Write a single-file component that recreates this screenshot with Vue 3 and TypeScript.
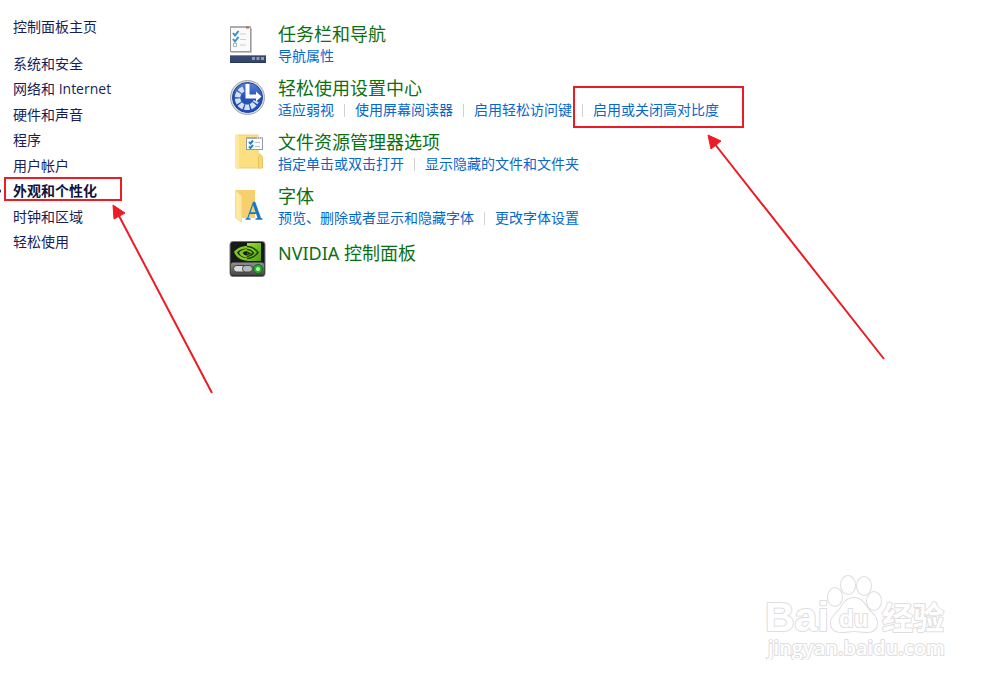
<script setup lang="ts">
interface Category {
  label: string
  current?: boolean
}

interface Task {
  label: string
  marked?: boolean
}

interface Group {
  icon: string
  title: string
  tasks: Task[]
}

const categories: Category[] = [
  { label: '系统和安全' },
  { label: '网络和 Internet' },
  { label: '硬件和声音' },
  { label: '程序' },
  { label: '用户帐户' },
  { label: '外观和个性化', current: true },
  { label: '时钟和区域' },
  { label: '轻松使用' },
]

const groups: Group[] = [
  { icon: 'taskbar', title: '任务栏和导航', tasks: [{ label: '导航属性' }] },
  {
    icon: 'ease',
    title: '轻松使用设置中心',
    tasks: [
      { label: '适应弱视' },
      { label: '使用屏幕阅读器' },
      { label: '启用轻松访问键' },
      { label: '启用或关闭高对比度', marked: true },
    ],
  },
  {
    icon: 'explorer',
    title: '文件资源管理器选项',
    tasks: [{ label: '指定单击或双击打开' }, { label: '显示隐藏的文件和文件夹' }],
  },
  {
    icon: 'fonts',
    title: '字体',
    tasks: [{ label: '预览、删除或者显示和隐藏字体' }, { label: '更改字体设置' }],
  },
  { icon: 'nvidia', title: 'NVIDIA 控制面板', tasks: [] },
]
</script>

<template>
  <div class="panel">
    <nav class="sidebar" aria-label="控制面板">
      <a class="home" href="#">控制面板主页</a>
      <ul class="categories">
        <li v-for="c in categories" :key="c.label" :class="{ current: c.current }">
          <a href="#" :aria-current="c.current ? 'page' : undefined">{{ c.label }}</a>
        </li>
      </ul>
    </nav>

    <main class="groups">
      <section v-for="g in groups" :key="g.icon" class="group">
        <svg v-if="g.icon === 'taskbar'" class="icon" viewBox="0 0 40 40" aria-hidden="true">
          <rect x="2.500" y="2.500" width="20" height="25" fill="#fafafa" stroke="#9b9b9b" />
          <path d="M23.500 4v24.500H3" fill="none" stroke="#c4c4c4" />
          <path d="M2 3h21" stroke="#a9adb0" stroke-width="2" />
          <path d="M18 3.500h3" stroke="#c4605a" stroke-width="2" />
          <path d="M5 9l2 2.500L10.500 7M5 15l2 2.500L10.500 13" fill="none" stroke="#2f93cf" stroke-width="2" />
          <rect x="5.500" y="19.500" width="3" height="3" fill="#fff" stroke="#b5b5b5" />
          <path d="M12 10h6M12 15.500h6M12 21h6" stroke="#c9ced1" />
          <rect x="2" y="31" width="36" height="8" fill="#34486f" />
          <path d="M2 31.500h36" stroke="#7485a6" />
          <path d="M2 38.500h36" stroke="#273655" />
          <path d="M24 34.500h3M28.500 34.500h3M33 34.500h3" stroke="#8f9db8" stroke-width="3" />
        </svg>

        <svg v-else-if="g.icon === 'ease'" class="icon" viewBox="0 0 40 40" aria-hidden="true">
          <defs>
            <linearGradient id="easeBlue" x1="0" y1="0" x2="0" y2="1">
              <stop offset="0" stop-color="#5b83d4" />
              <stop offset=".5" stop-color="#2451b4" />
              <stop offset="1" stop-color="#1f50c0" />
            </linearGradient>
          </defs>
          <circle cx="19.500" cy="19.500" r="17" fill="#d7dadd" stroke="#a3a8ad" />
          <circle cx="19.500" cy="19.500" r="15" fill="url(#easeBlue)" stroke="#1c409a" />
          <path d="M15.500 11A9.500 9.500 0 1 0 28 23" fill="none" stroke="#d5dff6" stroke-width="5.500" stroke-dasharray="4.700 1.200" />
          <path d="M17.500 6h4v10.500h6.500V13.500L33.500 18.500l-5.500 5v-3H17.500z" fill="#fff" />
        </svg>

        <svg v-else-if="g.icon === 'explorer'" class="icon" viewBox="0 0 40 40" aria-hidden="true">
          <path d="M8 3h22v19h2V36H8z" fill="#fbdf80" stroke="#f0d072" />
          <path d="M8 3h3v33H8z" fill="#ffe99f" />
          <path d="M30.500 36V25l2-2.500 2 2.500v11z" fill="#f9d872" stroke="#e8c460" />
          <rect x="18.500" y="5.500" width="16" height="12" fill="#fafcfd" stroke="#969b9d" />
          <path d="M18 6h17" stroke="#a9adb0" stroke-width="2" />
          <path d="M29 6h1M31 6h1M33 6h1" stroke="#fff" />
          <path d="M21 10l1.500 1.500L25 8.500M21 14.500l1.500 1.500L25 13" fill="none" stroke="#2385cc" stroke-width="2" />
          <path d="M27 10.500h5M27 14.500h5" stroke="#bdc3c6" />
        </svg>

        <svg v-else-if="g.icon === 'fonts'" class="icon" viewBox="0 0 40 40" aria-hidden="true">
          <path d="M8 4h19v28H12z" fill="#f5d06c" />
          <path d="M7.500 4.500l6 5.500v26l-6-4z" fill="#ffe8a0" stroke="#f5dc8f" />
          <path d="M17.500 33.800v-1.300l1.700-.5 5.800-16.300h2.200L33 32l1.500.5v1.300h-7v-1.300l2-.5-1.300-4h-6.400l-1.400 4 2.200.5v1.300zM22.600 26.200h4.900l-2.500-7.200z" fill="#1479cb" />
        </svg>

        <svg v-else class="icon" viewBox="0 0 40 40" aria-hidden="true">
          <defs>
            <linearGradient id="nvGreen" x1="0" y1="0" x2="1" y2="1">
              <stop offset="0" stop-color="#a0e32d" />
              <stop offset="1" stop-color="#4f9c0b" />
            </linearGradient>
            <linearGradient id="nvGray" x1="0" y1="0" x2="0" y2="1">
              <stop offset="0" stop-color="#919191" />
              <stop offset="1" stop-color="#444" />
            </linearGradient>
          </defs>
          <rect x="2" y="1.500" width="35" height="35" rx="3" fill="#171b18" stroke="#777" />
          <rect x="19" y="3" width="14" height="18" fill="url(#nvGreen)" />
          <path d="M6 12c3-4 8-6 13-6v2.500c-4 0-8 1.500-10 4 2 3.500 6 5.500 10 5.500v2.500C13 20.500 8 17 6 12z" fill="#82c622" />
          <path d="M11 12.500c2-2 5-3.500 8-3.500v2c-2 0-3.500.8-4.500 2 1 1.500 2.500 2.500 4.500 2.500V17.500c-4 0-7-2-8-5z" fill="#82c622" />
          <path d="M19 6.500c5 0 8 2 11 6-3 4-6 6-11 6" fill="none" stroke="#1c400a" stroke-width="1.500" />
          <path d="M19 9.500c3 0 5 1.500 6.500 3.500-2 2.500-4 3.500-6.500 3.500M19 12l3 1.500-3 1" fill="none" stroke="#1c400a" stroke-width="1.500" />
          <rect x="3" y="22.500" width="33" height="13" rx="2" fill="url(#nvGray)" />
          <rect x="5.500" y="25.500" width="19" height="6.500" rx="3.200" fill="#d9dcdd" stroke="#414141" />
          <rect x="14.500" y="25.500" width="10" height="6.500" rx="3.200" fill="#b6b9bb" stroke="#494949" />
          <circle cx="30" cy="29" r="4.500" fill="#28ae27" stroke="#176a18" />
          <circle cx="30" cy="29" r="2" fill="#b9ffae" />
        </svg>

        <div class="text">
          <h2><a href="#">{{ g.title }}</a></h2>
          <ul v-if="g.tasks.length" class="tasks">
            <li v-for="t in g.tasks" :key="t.label" :class="{ marked: t.marked }">
              <a href="#">{{ t.label }}</a>
            </li>
          </ul>
        </div>
      </section>
    </main>

    <svg class="arrows" width="1000" height="420" viewBox="0 0 1000 420" aria-hidden="true">
      <g stroke="#ed1c24" stroke-width="2" fill="#ed1c24">
        <path d="M118 214L212 393M714 143L884 359" />
        <path d="M113 205l1 14 11-6zM708 135l3 14 10-8z" stroke-width="1" />
      </g>
    </svg>

    <svg class="watermark" width="190" height="100" viewBox="0 0 190 100" role="img" aria-label="Baidu 经验">
      <g class="outline">
        <ellipse cx="75" cy="37" rx="7" ry="9" />
        <ellipse cx="88" cy="25" rx="7" ry="9" />
        <ellipse cx="104" cy="26" rx="7" ry="9" />
        <ellipse cx="114" cy="41" rx="7" ry="9" />
        <path d="M94 38c-8 0-11 6-14 11-4 5-9 8-9 14 0 7 5 9 11 9 5 0 8-1 12-1s8 1 13 1c6 0 10-3 10-9 0-7-5-9-9-14-4-6-7-11-14-11z" />
        <text x="5" y="71" font-size="41">Bai</text>
        <text x="79" y="67" font-size="24">du</text>
        <text x="122" y="69" font-size="31">经验</text>
        <text class="domain" x="8" y="95" font-size="20">jingyan.baidu.com</text>
      </g>
    </svg>
  </div>
</template>

<style>
body {
  margin: 0;
  background: #fff;
}
</style>

<style scoped>
.panel {
  position: relative;
  display: grid;
  grid-template-columns: 228px minmax(0, 1fr);
  min-height: 100vh;
  overflow: hidden;
  font-family: "Open Sans", "Noto Sans CJK SC", sans-serif;
  font-size: 14px;
  line-height: 20px;
}

a {
  color: inherit;
  text-decoration: none;
}

a:hover {
  text-decoration: underline;
}

ul {
  margin: 0;
  padding: 0;
  list-style: none;
}

.sidebar {
  padding: 17px 0 0 13px;
  color: #171d58;
}

.home {
  display: block;
}

.categories {
  display: grid;
  min-height: 204px;
  margin-top: 14px;
}

.categories li {
  display: flex;
  align-items: center;
}

.current {
  position: relative;
  font-weight: 700;
  color: #10143f;
}

.current::before {
  content: "";
  position: absolute;
  left: -16px;
  width: 4px;
  height: 4px;
  border-radius: 50%;
  background: #171d58;
}

.current::after {
  content: "";
  position: absolute;
  left: -9px;
  top: -2px;
  width: 114px;
  height: 20px;
  border: 2px solid #ed1c24;
}

.groups {
  display: flex;
  flex-direction: column;
  gap: 10px;
  padding-top: 22px;
}

.group {
  display: flex;
  align-items: center;
  gap: 10px;
  min-height: 44px;
}

.icon {
  flex: none;
  width: 40px;
  height: 40px;
}

.text {
  min-width: 0;
}

h2 {
  margin: 0;
  font-family: "Noto Sans", "Noto Sans CJK SC", sans-serif;
  font-size: 18px;
  font-weight: 400;
  line-height: 24px;
  color: #0b7013;
}

.group:last-child h2 {
  padding-bottom: 14px;
}

.tasks {
  display: flex;
  color: #0767cb;
  white-space: nowrap;
}

.tasks li {
  position: relative;
  display: flex;
  align-items: center;
}

.tasks li + li::before {
  content: "";
  width: 1px;
  height: 13px;
  margin: 0 10px;
  background: #d2d2d2;
}

.marked::after {
  content: "";
  position: absolute;
  left: 1px;
  top: -14px;
  width: 167px;
  height: 38px;
  border: 2px solid #ed1c24;
}

.arrows {
  position: absolute;
  left: 0;
  top: 0;
  pointer-events: none;
}

.watermark {
  position: absolute;
  right: 50px;
  bottom: 22px;
  pointer-events: none;
}

.outline {
  fill: #fff;
  stroke: #dedede;
  stroke-width: 2px;
  stroke-linejoin: round;
  paint-order: stroke;
  font-family: "Liberation Sans", "Noto Sans CJK SC", sans-serif;
  font-weight: 700;
}

.domain {
  font-family: "Open Sans", sans-serif;
  font-weight: 600;
}
</style>
